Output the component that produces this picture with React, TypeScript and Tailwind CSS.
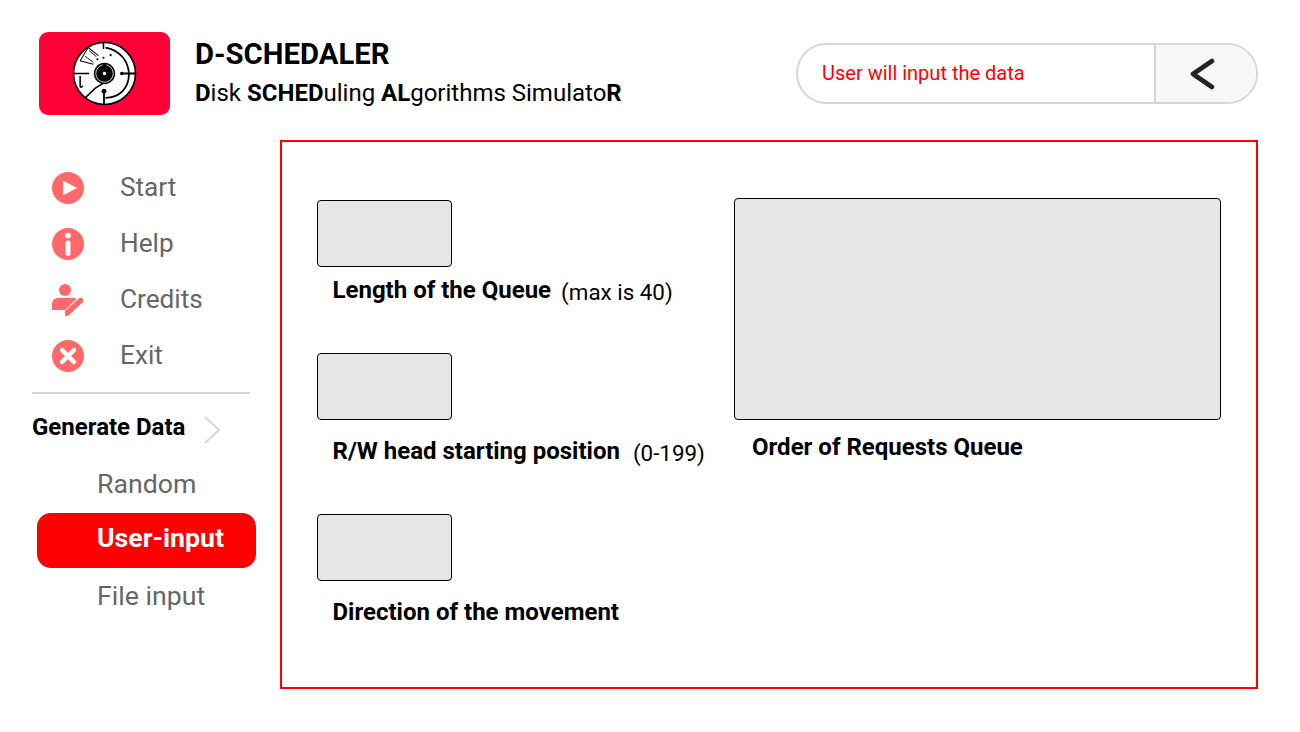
import React from 'react';

const DiskLogo = () => (
  <svg viewBox="0 0 64 64" className="w-[65px] h-[65px]">
    <circle cx="32" cy="32" r="30.5" fill="#fff" stroke="#000" strokeWidth="1.6" />
    <circle cx="32" cy="32" r="10.5" fill="#000" />
    <circle cx="32" cy="32" r="8.6" fill="none" stroke="#fff" strokeWidth="0.8" />
    <circle cx="32" cy="32" r="1.7" fill="#fff" />
    <g fill="none" stroke="#000" strokeWidth="1.5">
      <path d="M2 32H17" />
      <path d="M31 1V8" />
      <path d="M33 56C47 56 56 46 56 33C56 20 47 9 33 6.5" strokeWidth="1.7" />
      <path d="M31.5 49V62" strokeWidth="1.8" />
      <path d="M13 56L23 46.5L31 41.5" />
      <path d="M8 34.5V44C8 46 10 46 10.5 44" />
      <path d="M8 19.5L16 6.5M8 19.5L21 23M16 6.5L26 14.5" strokeWidth="1" />
      <path d="M13 15L21 21M17 9.5L24 15.5" strokeWidth="0.9" />
    </g>
    <path d="M50 31H63V33H50Z" fill="#000" />
    <circle cx="49" cy="32" r="1.8" fill="#000" />
    <circle cx="31.5" cy="49.5" r="2.4" fill="#000" />
    <circle cx="32" cy="24.5" r="2" fill="#000" />
    <circle cx="38" cy="14" r="1.1" fill="#000" />
    <circle cx="31" cy="16.5" r="1" fill="#000" />
    <circle cx="25" cy="18" r="1" fill="#000" />
  </svg>
);

const PlayIcon = () => (
  <svg viewBox="0 0 32 32" className="w-8 h-8">
    <circle cx="16" cy="16" r="16" fill="#ff6969" />
    <path d="M11 8.5L25 16L11 23.5Z" fill="#fff" />
  </svg>
);

const InfoIcon = () => (
  <svg viewBox="0 0 32 32" className="w-8 h-8">
    <circle cx="16" cy="16" r="16" fill="#ff6969" />
    <circle cx="16" cy="7.5" r="2.8" fill="#fff" />
    <rect x="13.5" y="12.5" width="5" height="15.5" rx="2.5" fill="#fff" />
  </svg>
);

const CreditsIcon = () => (
  <svg viewBox="0 0 32 32" className="w-8 h-8">
    <circle cx="13" cy="6" r="6" fill="#ff6969" />
    <path d="M0 20C0 16 3 14 6 14H22C23 14 24 14.5 24.5 15L13 26H0Z" fill="#ff6969" />
    <path d="M13 27V32H16L31 18C32.5 16 30 12.5 27.5 14Z" fill="#ff6969" />
  </svg>
);

const ExitIcon = () => (
  <svg viewBox="0 0 32 32" className="w-8 h-8">
    <circle cx="16" cy="16" r="16" fill="#ff6969" />
    <path d="M10 10L22 22M22 10L10 22" stroke="#fff" strokeWidth="4.5" strokeLinecap="round" />
  </svg>
);

const menu = [
  { label: 'Start', icon: <PlayIcon /> },
  { label: 'Help', icon: <InfoIcon /> },
  { label: 'Credits', icon: <CreditsIcon /> },
  { label: 'Exit', icon: <ExitIcon /> },
];

type FieldProps = { label: string; hint?: string; hintClass?: string; labelTop: string; mb: string };

const Field = ({ label, hint, hintClass, labelTop, mb }: FieldProps) => (
  <div className={mb}>
    <div className="w-[135px] h-[67px] bg-[#e6e6e6] border border-black rounded-[4px]" />
    <div className={`flex items-baseline pl-[15.5px] h-[38px] ${labelTop}`}>
      <span className="text-[24px] leading-[30px] font-bold text-black">{label}</span>
      {hint && <span className={`text-[22.4px] leading-[30px] text-black translate-y-[2px] ${hintClass}`}>{hint}</span>}
    </div>
  </div>
);

const App: React.FC = () => {
  return (
    <div className="w-[1300px] h-[732px] bg-white overflow-hidden font-['Roboto',sans-serif] flex flex-col">
      {/* header */}
      <header className="flex items-center h-[140px] pl-[39px] pr-[42px] pb-[2px] pt-[9px]">
        <div className="w-[131px] h-[83px] bg-[#ff0037] rounded-[9px] flex items-center justify-center">
          <DiskLogo />
        </div>
        <div className="ml-[25px] pb-[2px]">
          <div className="text-[29.3px] leading-[35px] font-bold text-black">D-SCHEDALER</div>
          <div className="text-[24px] leading-[32px] mt-[5px] text-black">
            <b>D</b>isk <b>SCHED</b>uling <b>AL</b>gorithms Simulato<b>R</b>
          </div>
        </div>
        <div className="ml-auto w-[462px] h-[61px] border-2 border-[#d6d6d6] rounded-full flex overflow-hidden">
          <div className="w-[356px] pl-[24px] pb-[2px] flex items-center text-[#ff0000] text-[20px]">User will input the data</div>
          <div className="flex-1 bg-[#f7f7f7] border-l-2 border-[#d6d6d6] flex items-center justify-center pr-[9px]">
            <svg viewBox="0 0 26 32" className="w-[26px] h-[32px]" fill="none" stroke="#222" strokeWidth="4.6" strokeLinecap="round" strokeLinejoin="round">
              <path d="M23 3L4 16L23 29" />
            </svg>
          </div>
        </div>
      </header>

      <div className="flex">
        {/* sidebar */}
        <aside className="w-[280px] shrink-0 pl-[32px] pt-[20px]">
          <ul className="w-[218px]">
            {menu.map(m => (
              <li key={m.label} className="flex items-center h-[56px] pl-[20px]">
                {m.icon}
                <span className="ml-[36px] text-[26.2px] text-[#666666]">{m.label}</span>
              </li>
            ))}
          </ul>
          <div className="w-[218px] h-[2px] bg-[#d6d6d6] mt-[8px]" />
          <div className="flex items-center mt-[13px] h-[40px]">
            <span className="text-[24px] font-bold text-black">Generate Data</span>
            <svg viewBox="0 0 18 30" className="w-[18px] h-[30px] ml-[18px] mt-[6px]" fill="none" stroke="#d6d6d6" strokeWidth="2">
              <path d="M2 2L16 15L2 28" />
            </svg>
          </div>
          <div className="mt-[11px]">
            <div className="h-[55px] ml-[5px] pl-[60px] pb-[2px] flex items-center text-[26.7px] text-[#666666]">Random</div>
            <div className="h-[55px] w-[219px] ml-[5px] pl-[60px] pb-[5px] flex items-center rounded-[14px] bg-[#ff0000] text-[26.7px] font-bold text-white">User-input</div>
            <div className="h-[57px] ml-[5px] pl-[60px] flex items-center text-[26.7px] text-[#666666]">File input</div>
          </div>
        </aside>

        {/* main panel */}
        <main className="w-[978px] h-[549px] border-2 border-[#ff0000] flex pl-[35px] pt-[58px]">
          <div className="w-[417px] shrink-0">
            <Field label="Length of the Queue" hint="(max is 40)" hintClass="ml-[10px]" labelTop="mt-[8px]" mb="mb-[40px]" />
            <Field label="R/W head starting position" hint="(0-199)" hintClass="ml-[13px]" labelTop="mt-[16px]" mb="mb-[40px]" />
            <Field label="Direction of the movement" labelTop="mt-[16px]" mb="" />
          </div>
          <div className="-mt-[2px]">
            <div className="w-[487px] h-[222px] bg-[#e6e6e6] border border-black rounded-[4px]" />
            <div className="pl-[18px] mt-[12px] text-[24px] leading-[30px] font-bold text-black">Order of Requests Queue</div>
          </div>
        </main>
      </div>
    </div>
  );
};

export default App;
